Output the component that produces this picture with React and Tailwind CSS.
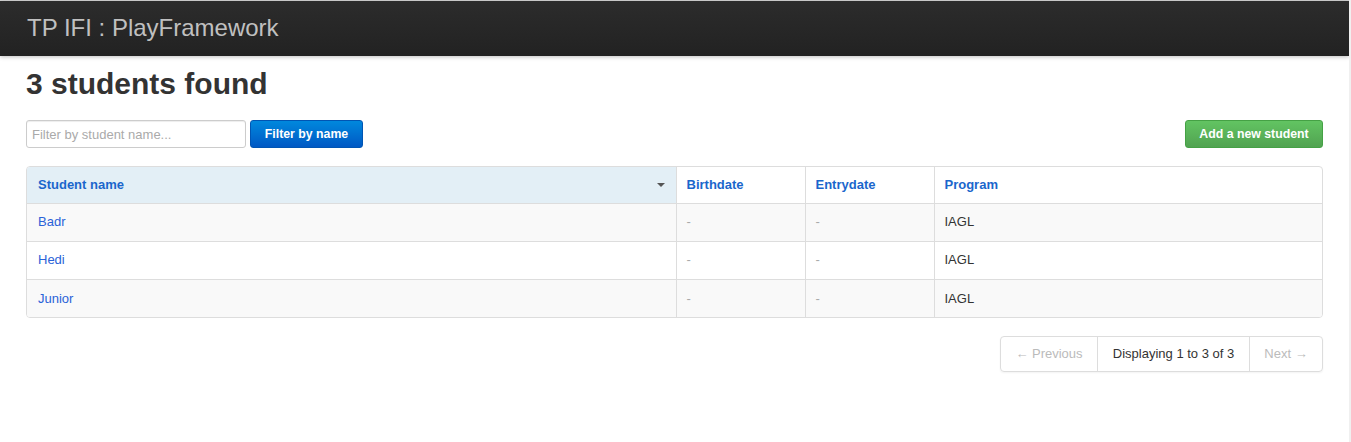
import React from "react";

const students = [
  { name: "Badr", birth: "-", entry: "-", program: "IAGL" },
  { name: "Hedi", birth: "-", entry: "-", program: "IAGL" },
  { name: "Junior", birth: "-", entry: "-", program: "IAGL" },
];

const App = () => {
  return (
    <div className="flex w-[1351px] h-[442px] bg-white font-['Liberation_Sans',Arial,sans-serif] text-[13px] text-[#333]">
      <div className="w-[1349px] flex flex-col">
        <div className="h-px bg-[#d4d4d4]" />
        <div className="h-[55px] bg-gradient-to-b from-[#2c2c2c] to-[#222] shadow-[0_1px_4px_rgba(0,0,0,0.25)] flex items-center pl-[27px] pb-[1px]">
          <span className="text-[24px] text-[#c0c0c0]">TP IFI : PlayFramework</span>
        </div>

        <div className="px-[26px]">
          <h1 className="mt-[10px] text-[30px] leading-[36px] font-bold text-[#333]">3 students found</h1>

          <div className="mt-[18px] flex items-center justify-between">
            <div className="flex items-center gap-[4px]">
              <input
                type="text"
                placeholder="Filter by student name..."
                className="w-[220px] h-[28px] px-[5px] border border-[#ccc] rounded-[3px] text-[13px] placeholder-[#aaa] shadow-[inset_0_1px_1px_rgba(0,0,0,0.075)] outline-none"
              />
              <button className="w-[113px] h-[28px] rounded-[3px] border border-[#0055b3] bg-gradient-to-b from-[#0088dd] to-[#0058c4] text-white font-bold text-[12.3px]">
                Filter by name
              </button>
            </div>
            <button className="w-[138px] h-[28px] rounded-[3px] border border-[#45a145] bg-gradient-to-b from-[#62c462] to-[#51a351] text-white font-bold text-[12.3px]">
              Add a new student
            </button>
          </div>

          <div className="mt-[18px] border border-[#ddd] rounded-[4px] overflow-hidden">
            <table className="w-full border-collapse">
              <thead>
                <tr className="h-[36px]">
                  <th className="w-[649px] bg-[#e3eff6] text-left pl-[11px] pr-[10px] font-bold text-[#1a66cc]">
                    <div className="flex items-center justify-between">
                      <span>Student name</span>
                      <span className="w-0 h-0 border-l-[4px] border-r-[4px] border-t-[4px] border-l-transparent border-r-transparent border-t-[#555] mr-[1px]" />
                    </div>
                  </th>
                  <th className="w-[129px] border-l border-[#ddd] text-left pl-[10px] font-bold text-[#1a66cc]">Birthdate</th>
                  <th className="w-[129px] border-l border-[#ddd] text-left pl-[10px] font-bold text-[#1a66cc]">Entrydate</th>
                  <th className="border-l border-[#ddd] text-left pl-[10px] font-bold text-[#1a66cc]">Program</th>
                </tr>
              </thead>
              <tbody>
                {students.map((s, i) => (
                  <tr key={s.name} className={`h-[38px] border-t border-[#ddd] ${i % 2 === 0 ? "bg-[#f9f9f9]" : "bg-white"}`}>
                    <td className="pl-[11px] text-[#2a62d8]">{s.name}</td>
                    <td className="border-l border-[#ddd] pl-[10px] text-[#aaa]">{s.birth}</td>
                    <td className="border-l border-[#ddd] pl-[10px] text-[#aaa]">{s.entry}</td>
                    <td className="border-l border-[#ddd] pl-[10px] text-[#333]">{s.program}</td>
                  </tr>
                ))}
              </tbody>
            </table>
          </div>

          <div className="mt-[18px] flex justify-end">
            <div className="flex h-[36px] border border-[#ddd] rounded-[4px] shadow-[0_1px_2px_rgba(0,0,0,0.05)]">
              <span className="w-[96px] flex items-center justify-center text-[#bbb]">← Previous</span>
              <span className="w-[152px] flex items-center justify-center border-l border-[#ddd] text-[#333]">Displaying 1 to 3 of 3</span>
              <span className="w-[73px] flex items-center justify-center border-l border-[#ddd] text-[#bbb]">Next →</span>
            </div>
          </div>
        </div>
      </div>
      <div className="w-[2px] bg-[#f0f0f0]" />
    </div>
  );
};

export default App;
